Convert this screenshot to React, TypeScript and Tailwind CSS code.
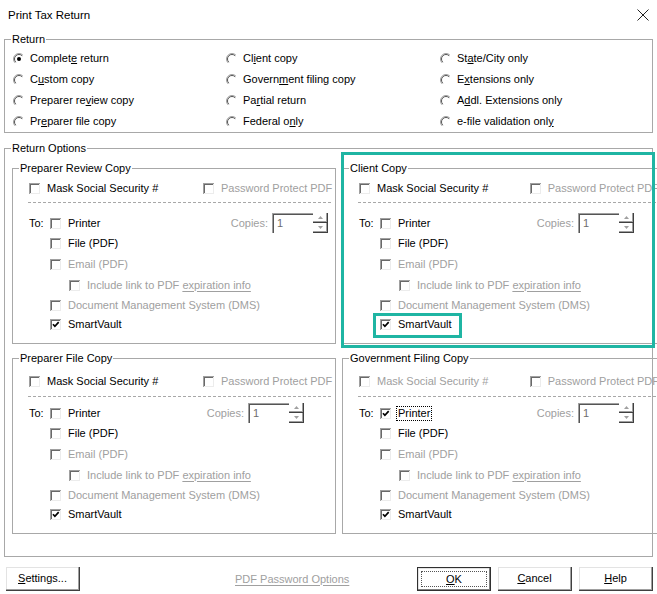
import React from 'react';

const GRAY = 'text-[#a0a0a0]';

function CheckBox({ checked = false }: { checked?: boolean }) {
  return (
    <svg width="11" height="11" viewBox="0 0 11 11" className="shrink-0">
      <rect x="0" y="0" width="11" height="11" fill="#fff" />
      <rect x="0" y="0" width="11" height="1" fill="#a0a0a0" />
      <rect x="0" y="0" width="1" height="11" fill="#a0a0a0" />
      <rect x="1" y="1" width="9" height="1" fill="#696969" />
      <rect x="1" y="1" width="1" height="9" fill="#696969" />
      <rect x="1" y="10" width="10" height="1" fill="#ececec" />
      <rect x="10" y="1" width="1" height="10" fill="#ececec" />
      {checked && <path d="M3 5.2 L4.9 7.3 L8.7 3.2" stroke="#000" strokeWidth="1.7" fill="none" />}
    </svg>
  );
}

function Radio({ checked = false }: { checked?: boolean }) {
  return (
    <svg width="12" height="12" viewBox="0 0 12 12" className="shrink-0">
      <path d="M2.1 9.9 A5.5 5.5 0 0 1 9.9 2.1" stroke="#a0a0a0" fill="none" />
      <path d="M2.8 9.2 A4.5 4.5 0 0 1 9.2 2.8" stroke="#555" fill="none" />
      {checked && <circle cx="6" cy="6" r="2" fill="#000" />}
    </svg>
  );
}

function RadioItem({ checked, children }: { checked?: boolean; children: React.ReactNode }) {
  return (
    <div className="flex items-center gap-[5px] h-[21px] whitespace-nowrap">
      <Radio checked={checked} />
      <span>{children}</span>
    </div>
  );
}

function Item({
  checked,
  disabled,
  children,
  className = '',
}: {
  checked?: boolean;
  disabled?: boolean;
  children: React.ReactNode;
  className?: string;
}) {
  return (
    <div className={`flex items-center gap-[7px] whitespace-nowrap ${className}`}>
      <CheckBox checked={checked} />
      <span className={disabled ? GRAY : 'text-black'}>{children}</span>
    </div>
  );
}

function SpinBtn({ up }: { up?: boolean }) {
  return (
    <div className="flex-1 flex items-center justify-center bg-white border-r border-b border-[#404040] shadow-[inset_-1px_-1px_0_#a0a0a0]">
      <svg width="5" height="3" viewBox="0 0 5 3">
        <path d={up ? 'M0 3 L2.5 0 L5 3Z' : 'M0 0 L2.5 3 L5 0Z'} fill="#a0a0a0" />
      </svg>
    </div>
  );
}

function Copies() {
  return (
    <div className="flex items-center">
      <div className="w-[41px] h-[20px] bg-white border-t border-l border-[#a0a0a0] shadow-[inset_1px_1px_0_#555] flex items-center pl-[4px] text-[#6d6d6d]">
        1
      </div>
      <div className="flex flex-col w-[15px] h-[20px]">
        <SpinBtn up />
        <SpinBtn />
      </div>
    </div>
  );
}

interface CopyBoxProps {
  title: string;
  width: string;
  head: string;
  copiesW: string;
  maskDisabled?: boolean;
  printerChecked?: boolean;
  printerFocus?: boolean;
}

function CopyBox({ title, width, head, copiesW, maskDisabled, printerChecked, printerFocus }: CopyBoxProps) {
  return (
    <fieldset className={`${width} shrink-0 min-w-0 border border-[#a8a8a8]`}>
      <legend className="ml-[6px] px-[1px] leading-[13px]">{title}</legend>
      <div className={head}>
        <div className="flex items-center h-[20px] pl-[16px]">
          <Item disabled={maskDisabled} className="w-[174px]">
            Mask Social Security #
          </Item>
          <Item disabled>Password Protect PDF</Item>
        </div>
        <div className="sep ml-[15px] w-[303px] border-t border-dashed border-[#a8a8a8]" />
      </div>
      <div className="flex items-center h-[20px] pl-[16px]">
        <div className={`${copiesW} flex items-center`}>
          <span className="w-[21px]">To:</span>
          <CheckBox checked={printerChecked} />
          <span className={`ml-[6px] px-[1px] ${printerFocus ? 'outline outline-1 outline-dotted outline-black' : ''}`}>
            Printer
          </span>
          <span className={`ml-auto mr-[4px] ${GRAY}`}>Copies:</span>
        </div>
        <Copies />
      </div>
      <Item className="h-[21px] pl-[37px]">File (PDF)</Item>
      <Item disabled className="h-[21px] pl-[37px]">Email (PDF)</Item>
      <div className="flex items-center gap-[7px] h-[20px] pl-[56px] whitespace-nowrap">
        <CheckBox />
        <span className={GRAY}>
          Include link to PDF <span className="underline underline-offset-2">expiration info</span>
        </span>
      </div>
      <Item disabled className="h-[21px] pl-[37px]">Document Management System (DMS)</Item>
      <Item checked className="h-[16px] pl-[37px] mb-[11px]">SmartVault</Item>
    </fieldset>
  );
}

function Btn({ children, def }: { children: React.ReactNode; def?: boolean }) {
  if (def) {
    return (
      <div className="w-[74px] h-[24px] flex bg-white border border-[#303030] shadow-[inset_-1px_-1px_0_#808080,inset_1px_1px_0_#e3e3e3] p-[3px]">
        <div className="flex-1 flex items-center justify-center border border-dotted border-[#555]">{children}</div>
      </div>
    );
  }
  return (
    <div className="w-[74px] h-[24px] flex items-center justify-center bg-white border-r border-b border-[#404040] shadow-[inset_-1px_-1px_0_#a0a0a0,inset_1px_1px_0_#e3e3e3]">
      {children}
    </div>
  );
}

export default function App() {
  return (
    <div className="relative w-[657px] h-[594px] overflow-hidden bg-white font-['Liberation_Sans',Arial,sans-serif] text-[11px] leading-[13px] text-black">
      {/* title bar */}
      <div className="flex items-center justify-between h-[33px] pl-[8px] pr-[8px] pb-[3px]">
        <span className="text-[11.5px]">Print Tax Return</span>
        <svg width="12" height="12" viewBox="0 0 12 12">
          <path d="M0.5 0.5 L11.5 11.5 M11.5 0.5 L0.5 11.5" stroke="#222" strokeWidth="1" />
        </svg>
      </div>

      {/* Return */}
      <fieldset className="ml-[4px] w-[649px] min-w-0 border border-[#a8a8a8]">
        <legend className="ml-[6px] px-[1px] leading-[13px]">Return</legend>
        <div className="grid grid-cols-[213px_214px_1fr] pl-[8px] pt-[2px]">
          <RadioItem checked>
            Complet<u className="underline">e</u> return
          </RadioItem>
          <RadioItem>
            Cl<u className="underline">i</u>ent copy
          </RadioItem>
          <RadioItem>
            St<u className="underline">a</u>te/City only
          </RadioItem>
          <RadioItem>
            C<u className="underline">u</u>stom copy
          </RadioItem>
          <RadioItem>
            Govern<u className="underline">m</u>ent filing copy
          </RadioItem>
          <RadioItem>
            E<u className="underline">x</u>tensions only
          </RadioItem>
          <RadioItem>
            Preparer re<u className="underline">v</u>iew copy
          </RadioItem>
          <RadioItem>
            Pa<u className="underline">r</u>tial return
          </RadioItem>
          <RadioItem>
            A<u className="underline">d</u>dl. Extensions only
          </RadioItem>
          <RadioItem>
            Pr<u className="underline">e</u>parer file copy
          </RadioItem>
          <RadioItem>
            Federal o<u className="underline">n</u>ly
          </RadioItem>
          <RadioItem>
            e-file validation onl<u className="underline">y</u>
          </RadioItem>
        </div>
      </fieldset>

      {/* Return Options */}
      <fieldset className="ml-[4px] mt-[9px] w-[649px] min-w-0 border border-[#a8a8a8]">
        <legend className="ml-[6px] px-[1px] leading-[13px]">Return Options</legend>
        <div className="flex flex-col gap-[8px] pl-[7px] pt-[7px] pb-[22px]">
          <div className="flex gap-[6px]">
            <CopyBox
              title="Preparer Review Copy"
              width="w-[324px]"
              head="pt-[3px] [&>.sep]:mt-[4px] [&>.sep]:mb-[10px]"
              copiesW="w-[243px]"
            />
            <CopyBox
              title="Client Copy"
              width="w-[318px]"
              head="pt-[3px] [&>.sep]:mt-[4px] [&>.sep]:mb-[10px]"
              copiesW="w-[219px]"
            />
          </div>
          <div className="flex gap-[6px]">
            <CopyBox
              title="Preparer File Copy"
              width="w-[324px]"
              head="pt-[6px] [&>.sep]:mt-[5px] [&>.sep]:mb-[6px]"
              copiesW="w-[219px]"
            />
            <CopyBox
              title="Government Filing Copy"
              width="w-[318px]"
              head="pt-[6px] [&>.sep]:mt-[5px] [&>.sep]:mb-[6px]"
              copiesW="w-[219px]"
              maskDisabled
              printerChecked
              printerFocus
            />
          </div>
        </div>
      </fieldset>

      {/* bottom buttons */}
      <div className="flex items-center mt-[10px] pl-[6px] pr-[4px]">
        <div className="w-[75px]">
          <Btn>
            <span>
              <u className="underline">S</u>ettings...
            </span>
          </Btn>
        </div>
        <span className={`ml-[154px] underline underline-offset-2 ${GRAY}`}>PDF Password Options</span>
        <div className="ml-auto flex gap-[7px]">
          <Btn def>
            <span>
              <u className="underline">O</u>K
            </span>
          </Btn>
          <Btn>
            <span>
              <u className="underline">C</u>ancel
            </span>
          </Btn>
          <Btn>
            <span>
              <u className="underline">H</u>elp
            </span>
          </Btn>
        </div>
      </div>

      {/* highlight annotations */}
      <div className="absolute left-[341px] top-[152px] w-[314px] h-[196px] border-[3px] border-[#1fb5a3]" />
      <div className="absolute left-[373px] top-[313px] w-[89px] h-[25px] border-[3px] border-[#1fb5a3]" />
    </div>
  );
}
